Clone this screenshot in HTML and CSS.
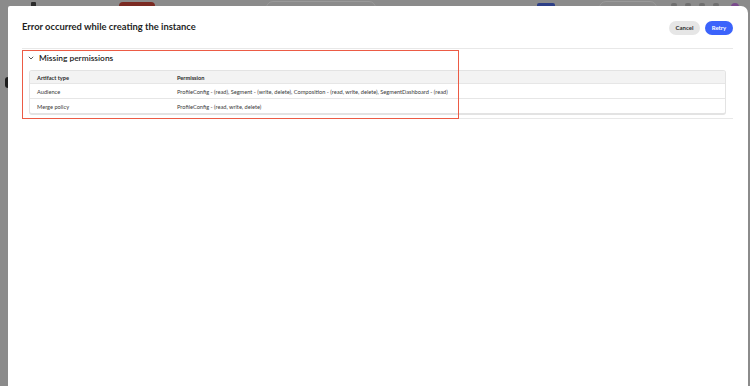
FILE: index.html
```html
<!DOCTYPE html>
<html lang="en">
<head>
    <meta charset="UTF-8">
    <title>Error occurred while creating the instance</title>
    <link rel="stylesheet" href="styles.css">
</head>
<body>
    <div class="app-bar">
        <span class="app-logo"></span>
        <span class="app-pill"></span>
        <span class="app-search"></span>
        <span class="app-blue"></span>
        <span class="app-search small"></span>
        <span class="app-icons"><i></i><i></i><i></i><i></i><i class="avatar"></i></span>
    </div>
    <span class="app-side"></span>

    <div class="dialog">
        <div class="dialog-header">
            <h1 class="dialog-title">Error occurred while creating the instance</h1>
            <div class="actions">
                <button class="btn btn-secondary">Cancel</button>
                <button class="btn btn-primary">Retry</button>
            </div>
        </div>

        <div class="section">
            <div class="highlight"></div>
            <div class="section-head">
                <svg class="chevron" width="6" height="4" viewBox="0 0 6 4"><path d="M0.8 0.8 L3 3 L5.2 0.8" fill="none" stroke="#444" stroke-width="0.9"/></svg>
                <span class="section-title">Missing permissions</span>
            </div>
            <div class="table">
                <div class="row head">
                    <div class="cell col-type">Artifact type</div>
                    <div class="cell">Permission</div>
                </div>
                <div class="row">
                    <div class="cell col-type">Audience</div>
                    <div class="cell">ProfileConfig - (read), Segment - (write, delete), Composition - (read, write, delete), SegmentDashboard - (read)</div>
                </div>
                <div class="row">
                    <div class="cell col-type">Merge policy</div>
                    <div class="cell">ProfileConfig - (read, write, delete)</div>
                </div>
            </div>
        </div>
    </div>
</body>
</html>
```

FILE: styles.css
```css
body {
    margin: 0;
    height: 386px;
    overflow: hidden;
    background: #8b8b8b;
    font-family: 'Lato', 'Open Sans', sans-serif;
    color: #222;
}

/* dimmed app behind the overlay */
.app-bar {
    position: fixed;
    top: 0;
    left: 0;
    right: 0;
    height: 20px;
    display: flex;
    align-items: flex-start;
    z-index: 0;
}

.app-logo {
    width: 5px;
    height: 5px;
    margin: 2px 0 0 31px;
    background: #2b2b2b;
    border-radius: 1px;
}

.app-pill {
    width: 36px;
    height: 8px;
    margin: 2px 0 0 83px;
    background: #7b2a22;
    border-radius: 4px;
}

.app-search {
    width: 108px;
    height: 12px;
    margin: 1px 0 0 111px;
    border: 1px solid #9a9a9a;
    border-radius: 7px;
}

.app-search.small {
    width: 56px;
    margin-left: 44px;
}

.app-blue {
    width: 18px;
    height: 8px;
    margin: 3px 0 0 161px;
    background: #2d3f86;
    border-radius: 2px;
}

.app-icons {
    display: flex;
    gap: 8px;
    margin: 3px 0 0 14px;
}

.app-icons i {
    width: 6px;
    height: 4px;
    background: #6f6f6f;
    border-radius: 2px;
}

.app-icons i.avatar {
    width: 8px;
    height: 8px;
    margin-left: 4px;
    background: #7a4a8c;
    border-radius: 50%;
}

.app-side {
    position: fixed;
    left: 5px;
    top: 77px;
    width: 3px;
    height: 11px;
    background: #1d1d1d;
    border-radius: 3px 0 0 3px;
}

.dialog {
    position: relative;
    z-index: 1;
    margin: 6px 2px 0 8px;
    height: 380px;
    box-sizing: border-box;
    background: #fff;
    border-radius: 2px 7px 0 0;
    padding: 0 15px 0 14px;
}

.dialog-header {
    display: flex;
    justify-content: space-between;
    align-items: center;
    height: 42px;
    border-bottom: 1px solid #e8e8e8;
}

.dialog-title {
    margin: 0 0 2px 0;
    font-size: 9.4px;
    font-weight: bold;
    color: #1f1f1f;
}

.actions {
    display: flex;
    gap: 5px;
    margin-top: 2px;
}

.btn {
    height: 14px;
    padding: 0;
    border: none;
    border-radius: 7px;
    font-family: inherit;
    font-size: 6px;
    font-weight: bold;
    line-height: 14px;
}

.btn-secondary {
    width: 31px;
    background: #e6e6e6;
    color: #2c2c2c;
}

.btn-primary {
    width: 28px;
    background: #3b63fb;
    color: #fff;
}

.section {
    position: relative;
    height: 70px;
    border-bottom: 1px solid #e8e8e8;
    box-sizing: border-box;
}

.highlight {
    position: absolute;
    left: 0;
    top: 1px;
    width: 437px;
    height: 69px;
    border: 1.5px solid #ec5b45;
    box-sizing: border-box;
    pointer-events: none;
}

.section-head {
    display: flex;
    align-items: center;
    height: 16px;
    padding: 1px 0 0 6px;
}

.chevron {
    margin-right: 5px;
}

.section-title {
    font-size: 8.4px;
    font-weight: 600;
    color: #222;
}

.table {
    margin: 4px 7px 0 7px;
    border: 1px solid #e3e3e3;
    border-bottom-width: 2px;
    border-radius: 3px;
    overflow: hidden;
}

.row {
    display: flex;
    align-items: center;
    height: 14px;
    border-top: 1px solid #e6e6e6;
    font-size: 5.65px;
    color: #3a3a3a;
}

.row.head {
    height: 12px;
    border-top: none;
    background: #f3f3f3;
    font-weight: bold;
    color: #2a2a2a;
}

.cell {
    padding-left: 7px;
    white-space: nowrap;
}

.col-type {
    width: 133px;
}
```
